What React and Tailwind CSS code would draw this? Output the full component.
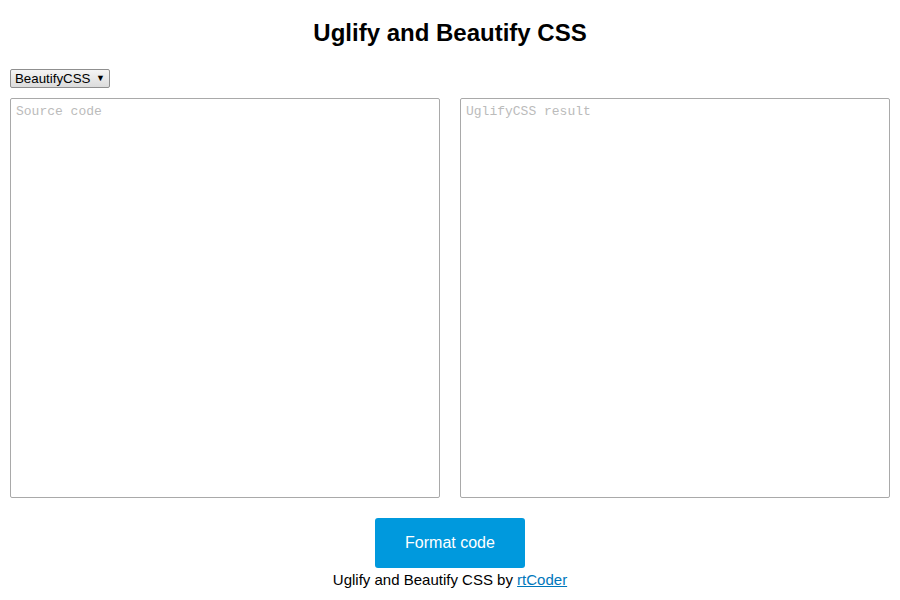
import React, { useState } from 'react';

const App = () => {
  const [mode, setMode] = useState('BeautifyCSS');
  const [source, setSource] = useState('');
  const [result, setResult] = useState('');

  const resultLabel = mode === 'BeautifyCSS' ? 'UglifyCSS result' : 'BeautifyCSS result';

  return (
    <div className="w-[900px] h-[600px] bg-white font-['Liberation_Sans',Arial,sans-serif] text-black">
      <h1 className="pt-[19px] text-center text-[24px] leading-[28px] font-bold">Uglify and Beautify CSS</h1>

      <div className="px-[10px] pt-[22px] flex">
        <div className="relative flex">
          <select
            value={mode}
            onChange={(e) => setMode(e.target.value)}
            className="appearance-none h-[19px] w-[100px] pl-[4px] pr-[18px] border border-[#8f8f8f] rounded-[2px] bg-gradient-to-b from-[#f4f4f4] to-[#dcdcdc] text-[13.3px] leading-[17px] text-black outline-none"
          >
            <option value="BeautifyCSS">BeautifyCSS</option>
            <option value="UglifyCSS">UglifyCSS</option>
          </select>
          <span className="pointer-events-none absolute right-[5px] top-0 h-[19px] flex items-center text-[9px]">▼</span>
        </div>
      </div>

      <div className="flex gap-[20px] px-[10px] pt-[10px]">
        <textarea
          value={source}
          onChange={(e) => setSource(e.target.value)}
          placeholder="Source code"
          className="w-[430px] h-[400px] resize-none border border-[#a9a9a9] rounded-[2px] px-[5px] py-[5px] font-['Liberation_Mono',monospace] text-[13px] leading-[16px] placeholder:text-[#bbbbbb] outline-none"
        />
        <textarea
          value={result}
          onChange={(e) => setResult(e.target.value)}
          placeholder={resultLabel}
          className="w-[430px] h-[400px] resize-none border border-[#a9a9a9] rounded-[2px] px-[5px] py-[5px] font-['Liberation_Mono',monospace] text-[13px] leading-[16px] placeholder:text-[#bbbbbb] outline-none"
        />
      </div>

      <div className="flex flex-col items-center pt-[20px]">
        <button
          onClick={() => setResult(source)}
          className="w-[150px] h-[50px] rounded-[3px] bg-[#0099dd] text-white text-[16px]"
        >
          Format code
        </button>
        <p className="mt-[3px] text-[15px] leading-[18px]">
          Uglify and Beautify CSS by <a href="#" className="text-[#0077bb] underline">rtCoder</a>
        </p>
      </div>
    </div>
  );
};

export default App;
